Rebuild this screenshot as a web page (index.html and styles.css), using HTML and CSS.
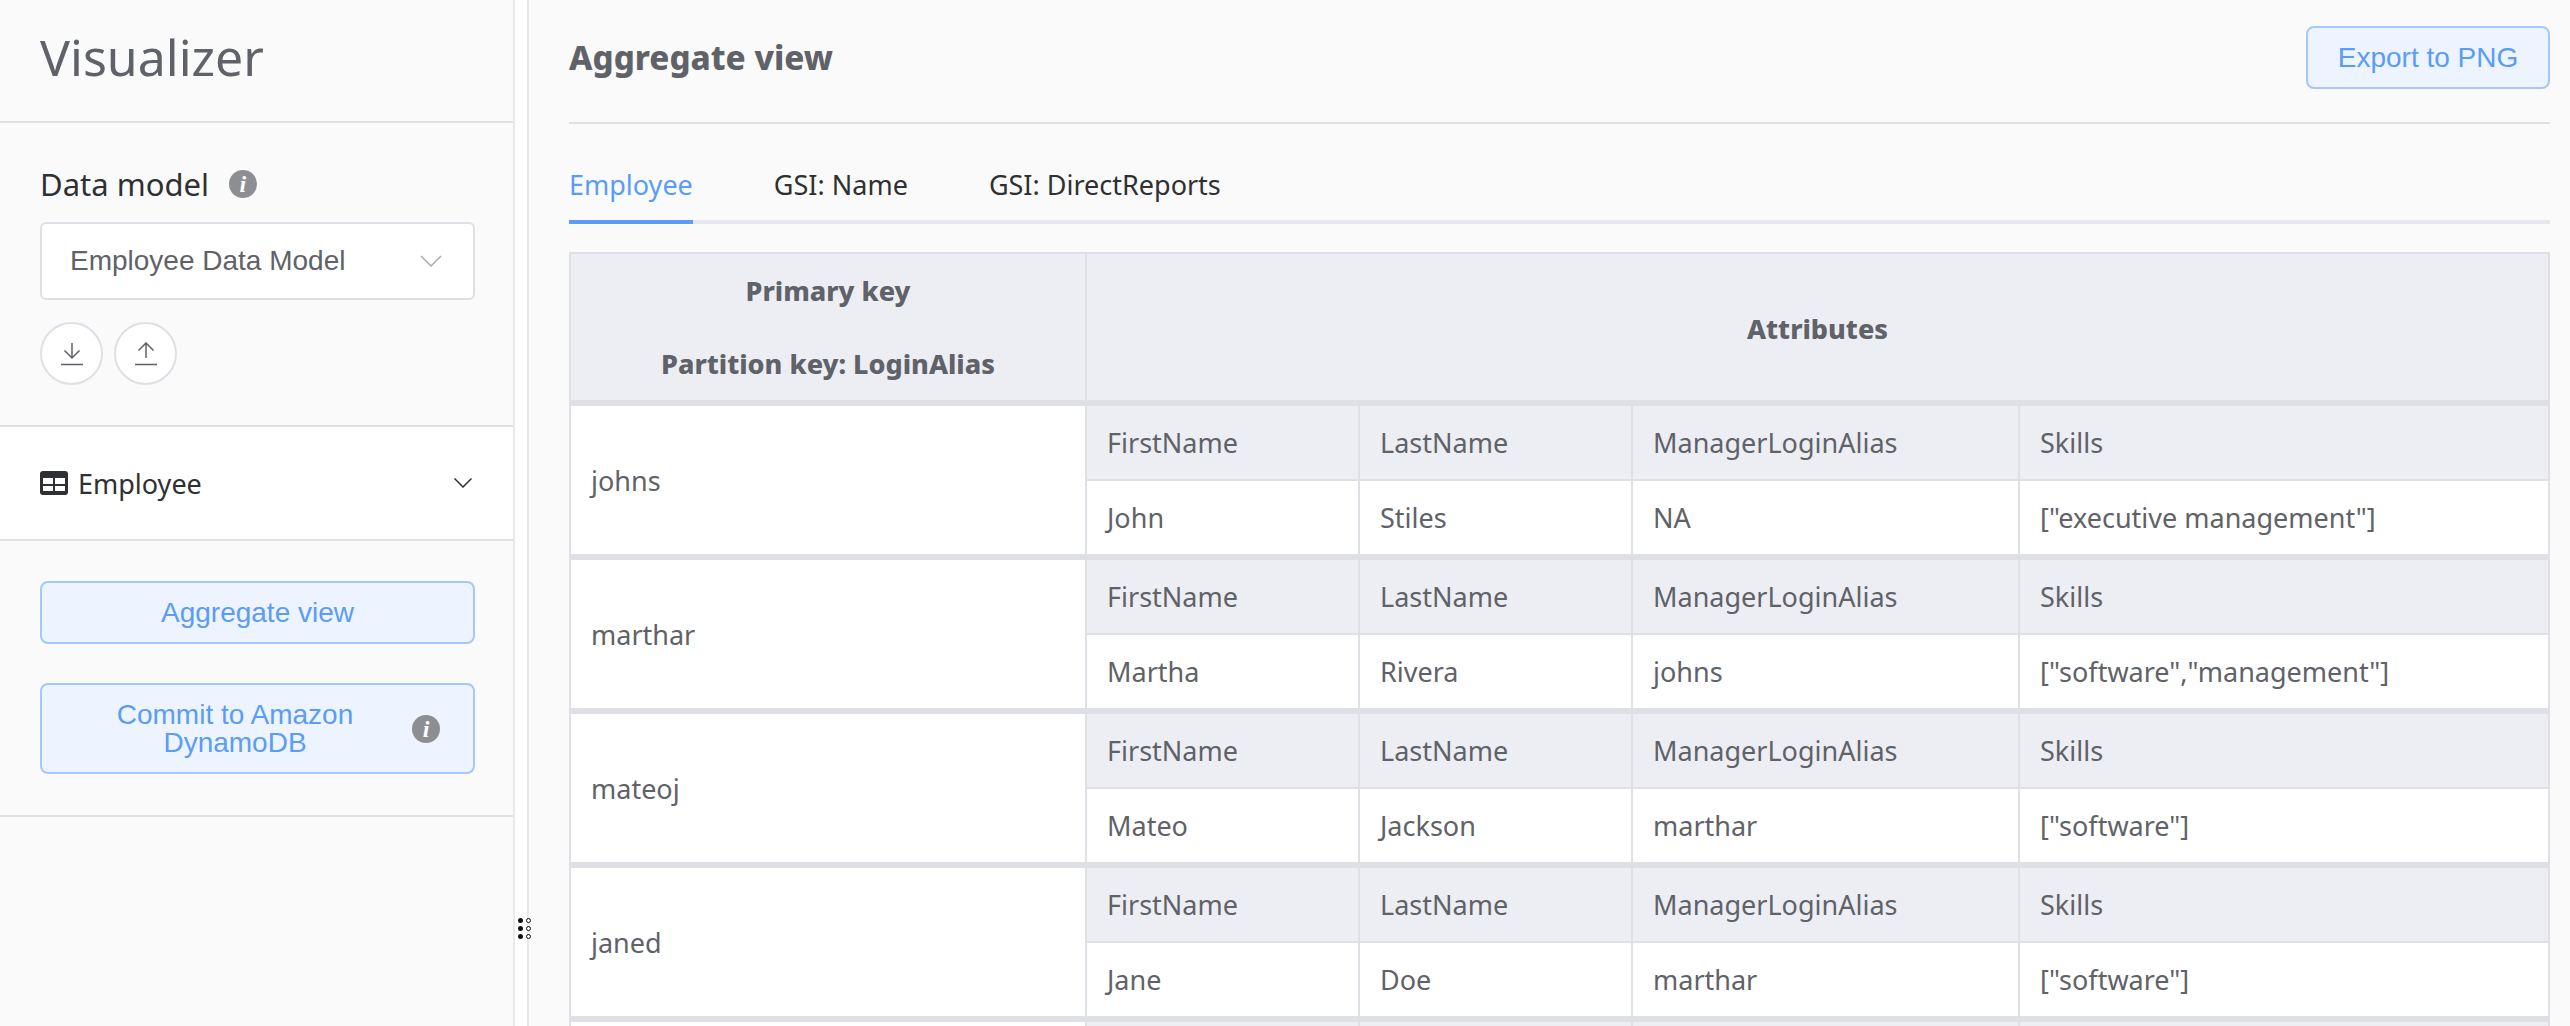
FILE: index.html
```html
<!DOCTYPE html>
<html lang="en">
<head>
    <meta charset="UTF-8" />
    <meta name="viewport" content="width=device-width, initial-scale=1.0"/>
    <title>Visualizer</title>
    <link rel="stylesheet" href="styles.css">
</head>
<body>

<aside class="sidebar">
    <h1 class="sidebar-title">Visualizer</h1>

    <section class="model">
        <div class="model-label">
            <span>Data model</span>
            <span class="info">i</span>
        </div>
        <div class="select">
            <span>Employee Data Model</span>
            <svg class="select-arrow" width="22" height="12" viewBox="0 0 22 12"><path d="M1 1l10 10L21 1"/></svg>
        </div>
        <div class="round-buttons">
            <button class="round" aria-label="Download">
                <svg width="22" height="24" viewBox="0 0 22 24"><path d="M11 1v15M3.500 8.500L11 16l7.500-7.500M0 22.500h22"/></svg>
            </button>
            <button class="round" aria-label="Upload">
                <svg width="22" height="24" viewBox="0 0 22 24"><path d="M11 16V1M3.500 8.500L11 1l7.500 7.500M0 22.500h22"/></svg>
            </button>
        </div>
    </section>

    <div class="table-row">
        <svg class="table-icon" width="28" height="24" viewBox="0 0 28 24">
            <rect width="28" height="24" rx="3" fill="#2f3033"/>
            <rect x="3" y="7" width="10" height="6" fill="#fff"/>
            <rect x="15" y="7" width="10" height="6" fill="#fff"/>
            <rect x="3" y="15" width="10" height="5" fill="#fff"/>
            <rect x="15" y="15" width="10" height="5" fill="#fff"/>
        </svg>
        <span class="table-name">Employee</span>
        <svg class="table-arrow" width="18" height="10" viewBox="0 0 18 10"><path d="M.5.500L9 9l8.500-8.500"/></svg>
    </div>

    <section class="actions">
        <button class="btn btn-wide">Aggregate view</button>
        <button class="btn btn-commit">
            <span class="btn-commit-text">Commit to Amazon DynamoDB</span>
            <span class="info">i</span>
        </button>
    </section>
</aside>

<div class="splitter">
    <div class="grip">
        <i></i><i class="hollow"></i>
        <i></i><i class="hollow"></i>
        <i></i><i class="hollow"></i>
    </div>
</div>

<main class="content">
    <header class="content-head">
        <h2>Aggregate view</h2>
        <button class="btn btn-export">Export to PNG</button>
    </header>

    <nav class="tabs">
        <a class="tab active">Employee</a>
        <a class="tab">GSI: Name</a>
        <a class="tab">GSI: DirectReports</a>
    </nav>

    <div class="aggregate">
        <div class="row head">
            <div class="key">
                <p>Primary key</p>
                <p>Partition key: LoginAlias</p>
            </div>
            <div class="attr-title">Attributes</div>
        </div>

        <div class="row">
            <div class="key-value">johns</div>
            <div class="attrs">
                <div class="name">FirstName</div><div class="name">LastName</div><div class="name">ManagerLoginAlias</div><div class="name">Skills</div>
                <div class="val">John</div><div class="val">Stiles</div><div class="val">NA</div><div class="val">["executive management"]</div>
            </div>
        </div>

        <div class="row">
            <div class="key-value">marthar</div>
            <div class="attrs">
                <div class="name">FirstName</div><div class="name">LastName</div><div class="name">ManagerLoginAlias</div><div class="name">Skills</div>
                <div class="val">Martha</div><div class="val">Rivera</div><div class="val">johns</div><div class="val">["software","management"]</div>
            </div>
        </div>

        <div class="row">
            <div class="key-value">mateoj</div>
            <div class="attrs">
                <div class="name">FirstName</div><div class="name">LastName</div><div class="name">ManagerLoginAlias</div><div class="name">Skills</div>
                <div class="val">Mateo</div><div class="val">Jackson</div><div class="val">marthar</div><div class="val">["software"]</div>
            </div>
        </div>

        <div class="row">
            <div class="key-value">janed</div>
            <div class="attrs">
                <div class="name">FirstName</div><div class="name">LastName</div><div class="name">ManagerLoginAlias</div><div class="name">Skills</div>
                <div class="val">Jane</div><div class="val">Doe</div><div class="val">marthar</div><div class="val">["software"]</div>
            </div>
        </div>

        <div class="row">
            <div class="key-value"></div>
            <div class="attrs">
                <div class="name"></div><div class="name"></div><div class="name"></div><div class="name"></div>
            </div>
        </div>
    </div>
</main>

</body>
</html>
```

FILE: styles.css
```css
* { box-sizing: border-box; }

body {
    margin: 0;
    height: 100vh;
    display: flex;
    overflow: hidden;
    background: #fafafa;
    color: #5f6268;
    font-family: "Noto Sans", sans-serif;
    font-size: 27px;
}

h1, h2, p { margin: 0; }

/* sidebar */
.sidebar {
    width: 515px;
    flex: none;
    border-right: 2px solid #e8e8ed;
}
.sidebar-title {
    height: 123px;
    padding: 23px 0 0 40px;
    border-bottom: 2px solid #dfe0e6;
    font-size: 50px;
    font-weight: 400;
    line-height: 68px;
}

.model {
    height: 304px;
    padding: 39px 38px 0 40px;
    border-bottom: 2px solid #dfe0e6;
}
.model-label {
    display: flex;
    align-items: center;
    gap: 20px;
    height: 44px;
    margin-bottom: 16px;
    color: #2f3033;
    font-size: 31px;
}
.info {
    width: 28px;
    height: 28px;
    flex: none;
    display: flex;
    align-items: center;
    justify-content: center;
    border-radius: 50%;
    background: #8d8e92;
    color: #fff;
    font-family: "Liberation Serif", serif;
    font-size: 24px;
    font-style: italic;
    font-weight: bold;
}
.select {
    height: 78px;
    display: flex;
    align-items: center;
    justify-content: space-between;
    padding: 0 31px 0 28px;
    background: #fff;
    border: 2px solid #dfe0e6;
    border-radius: 6px;
    font-family: "Liberation Sans", sans-serif;
    font-size: 28px;
}
.select-arrow path { fill: none; stroke: #a9abb0; stroke-width: 1.500; }
.round-buttons {
    display: flex;
    gap: 11px;
    margin-top: 22px;
}
.round {
    width: 63px;
    height: 63px;
    padding: 0;
    display: flex;
    align-items: center;
    justify-content: center;
    background: #fff;
    border: 2px solid #dfe0e6;
    border-radius: 50%;
}
.round path { fill: none; stroke: #5f6268; stroke-width: 1.500; }

.table-row {
    height: 114px;
    display: flex;
    align-items: center;
    padding: 0 41px 0 40px;
    background: #fff;
    border-bottom: 2px solid #dfe0e6;
}
.table-name {
    margin-left: 10px;
    color: #2f3033;
    font-size: 27px;
}
.table-arrow { margin-left: auto; }
.table-arrow path { fill: none; stroke: #2f3033; stroke-width: 1.500; }

.actions {
    display: flex;
    flex-direction: column;
    gap: 39px;
    padding: 40px 38px 41px 40px;
    border-bottom: 2px solid #dfe0e6;
}
.btn {
    background: #edf4ff;
    border: 2px solid #a3c8fb;
    border-radius: 8px;
    color: #5a9cf8;
    font-family: "Liberation Sans", sans-serif;
    font-size: 28px;
    line-height: 28px;
}
.btn-wide { height: 63px; }
.btn-commit {
    height: 91px;
    display: flex;
    align-items: center;
    padding: 0 33px 0 20px;
}
.btn-commit-text { flex: 1; padding: 0 36px 0 32px; text-align: center; }

/* drag handle between the panes */
.splitter {
    position: relative;
    width: 14px;
    flex: none;
    background: #fff;
    border-right: 2px solid #e8e8ed;
}
.grip {
    position: absolute;
    top: 918px;
    left: 3px;
    display: grid;
    grid-template-columns: 5px 5px;
    column-gap: 3px;
    row-gap: 3px;
}
.grip i {
    width: 5px;
    height: 5px;
    border-radius: 50%;
    background: #111;
}
.grip i.hollow { background: #fff; border: 1px solid #111; }

/* main pane */
.content {
    flex: 1;
    min-width: 0;
    padding: 0 20px 0 40px;
}
.content-head {
    height: 124px;
    display: flex;
    justify-content: space-between;
    padding-top: 24px;
    border-bottom: 2px solid #dfe0e6;
}
.content-head h2 {
    font-size: 33.200px;
    font-weight: 800;
    line-height: 68px;
}
.btn-export { width: 244px; height: 63px; margin-top: 2px; }

.tabs {
    display: flex;
    gap: 81px;
    height: 100px;
    padding-top: 28px;
    border-bottom: 4px solid #e6e6ec;
}
.tab {
    height: 72px;
    padding-top: 15px;
    color: #2f3033;
    line-height: 36px;
}
.tab.active {
    color: #5a9cf8;
    border-bottom: 4px solid #5a9cf8;
}

.aggregate {
    margin-top: 28px;
    border: 2px solid #dfe0e6;
    border-bottom: 0;
}
.row {
    display: grid;
    grid-template-columns: 516px 1fr;
    height: 148px;
    margin-bottom: 6px;
    background: #fff;
}
.row:last-child { margin-bottom: 0; }
.row + .row { box-shadow: 0 -6px 0 #dfe0e6; }

.head { height: 146px; background: #eceef3; }
.key {
    display: flex;
    flex-direction: column;
    justify-content: center;
    gap: 36px;
    border-right: 2px solid #dfe0e6;
    font-weight: 800;
    text-align: center;
}
.attr-title {
    display: flex;
    align-items: center;
    justify-content: center;
    padding-top: 2px;
    font-weight: 800;
}
.key-value {
    display: flex;
    align-items: center;
    padding-left: 20px;
    border-right: 2px solid #dfe0e6;
}
.attrs {
    display: grid;
    grid-template-columns: 273px 273px 387px 1fr;
    grid-template-rows: 75px 73px;
}
.name, .val {
    display: flex;
    align-items: center;
    padding-left: 20px;
    border-right: 2px solid #dfe0e6;
}
.name {
    background: #eceef3;
    border-bottom: 2px solid #dfe0e6;
}
.name:nth-child(4n), .val:nth-child(4n) { border-right: 0; }
```
